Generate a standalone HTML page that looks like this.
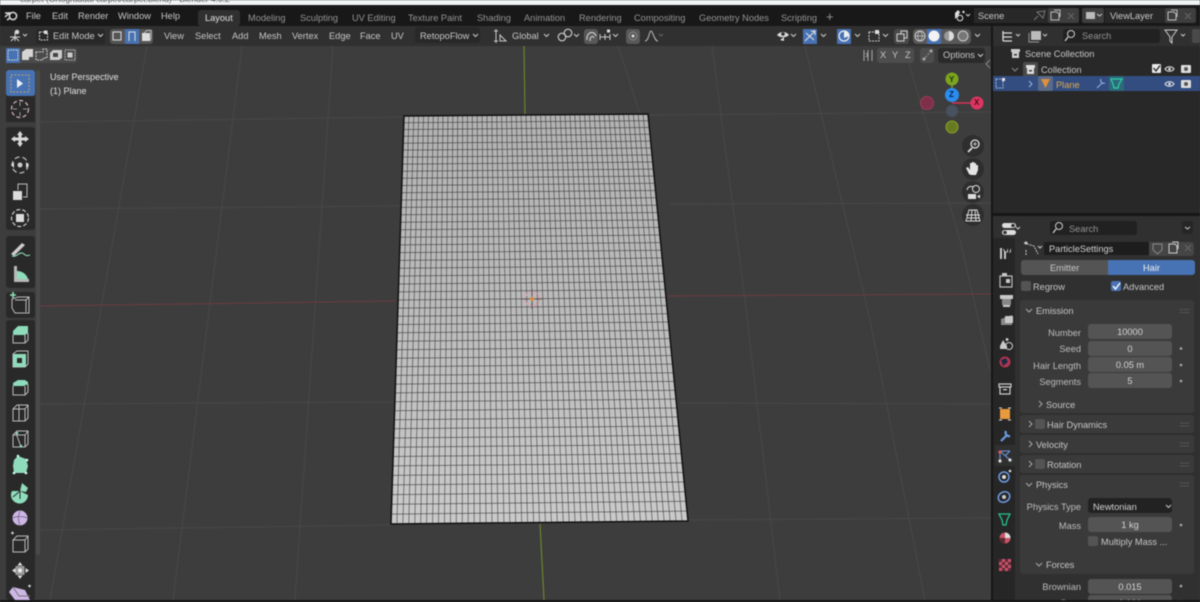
<!DOCTYPE html>
<html><head><meta charset="utf-8"><title>Blender</title>
<style>
html,body{margin:0;padding:0;width:1200px;height:602px;overflow:hidden;background:#3d3d3d}
#r{position:absolute;left:0;top:0;width:1200px;height:602px;overflow:hidden;filter:blur(.5px);font-family:"Liberation Sans",sans-serif;font-size:9.25px;color:#c6c6c6}
.b{position:absolute}
.t{position:absolute;white-space:nowrap;line-height:12px}
.d{color:#949494}
.f{position:absolute;left:1088px;width:84px;height:15px;line-height:16px;background:#545454;border-radius:3px;text-align:center;color:#d4d4d4}
.l{position:absolute;width:77px;left:1004px;text-align:right;line-height:12px;color:#bdbdbd}
.p{position:absolute;left:1020px;width:174px;background:#3a3a3a;border-radius:3px}
svg{position:absolute;left:0;top:0}
</style></head><body><div id="r">
<!-- base regions -->
<div class="b" style="left:0;top:0;width:1200px;height:5px;background:#f1f4f5"></div>
<div class="t" style="left:20px;top:-7px;color:#666;font-size:8.5px">carpet (Ortogradual carpet/carpet.blend) - Blender 4.0.2</div>
<div class="b" style="left:0;top:5px;width:1200px;height:21px;background:#181818"></div>
<div class="b" style="left:0;top:26px;width:991px;height:20px;background:#303030"></div>
<div class="b" style="left:0;top:46px;width:991px;height:554px;background:#3d3d3d"></div>
<div class="b" style="left:991px;top:26px;width:2px;height:576px;background:#161616"></div>
<div class="b" style="left:993px;top:26px;width:207px;height:20px;background:#303030"></div>
<div class="b" style="left:993px;top:46px;width:207px;height:167px;background:#282828"></div>
<div class="b" style="left:993px;top:213px;width:207px;height:3px;background:#161616"></div>
<div class="b" style="left:993px;top:216px;width:207px;height:22px;background:#303030"></div>
<div class="b" style="left:993px;top:238px;width:22px;height:364px;background:#262626"></div>
<div class="b" style="left:1015px;top:238px;width:185px;height:364px;background:#303030"></div>
<div class="b" style="left:0;top:600px;width:1200px;height:2px;background:#141414"></div>

<!-- viewport grid + mesh -->
<svg width="1200" height="602" viewBox="0 0 1200 602">
<defs><linearGradient id="m" x1="0" y1="0" x2="0" y2="1"><stop offset="0" stop-color="#b2b2b2"/><stop offset=".5" stop-color="#bcbcbc"/><stop offset="1" stop-color="#cacaca"/></linearGradient></defs>
<g stroke="#484848" stroke-width="1" fill="none">
<path d="M147 46L50 600M242 46L173 600M333 46L295 600M618 46L640 114M712 46L745 300L780 600M805 46L870 320L925 600M904 46L960 240L990 370"/>
<path d="M40 122L404 117M648 115L991 112M40 209L400 206M670 204L991 203M40 404L394 402M680 403L991 404M40 530L391 525M688 520L991 518"/>
</g>
<path d="M40 306L396 301M668 296L991 294" stroke="#6e3a40" stroke-width="1" fill="none"/>
<path d="M524 46L525 114M540 524L544 600" stroke="#6f8a2a" stroke-width="1.100" fill="none"/>
<path d="M404 116L648 114L688 521L391 524Z" fill="url(#m)"/>
<g stroke="#2e2e2e" stroke-width=".75" stroke-opacity=".72" fill="none">
<path d="M408.9 115.5L396.9 523M413.8 115.5L402.9 523M418.6 115.5L408.8 523M423.5 115.5L414.8 523M428.4 115.5L420.7 523M433.3 115.5L426.6 523M438.2 115.5L432.6 523M443 115.5L438.5 523M447.9 115.5L444.5 523M452.8 115.5L450.4 523M457.7 115.5L456.3 523M462.6 115.5L462.3 523M467.4 115.5L468.2 523M472.3 115.5L474.2 523M477.2 115.5L480.1 523M482.1 115.5L486 523M487 115.5L492 523M491.8 115.5L497.9 523M496.7 115.5L503.9 522.5M501.6 115.5L509.8 522.5M506.5 115.5L515.7 522.5M511.4 115L521.7 522.5M516.2 115L527.6 522.5M521.1 115L533.6 522.5M526 115L539.5 522.5M530.9 115L545.4 522.5M535.8 115L551.4 522.5M540.6 115L557.3 522.5M545.5 115L563.3 522.5M550.4 115L569.2 522.5M555.3 115L575.1 522.5M560.2 115L581.1 522.5M565 115L587 522.5M569.9 115L593 522.5M574.8 115L598.9 522M579.7 115L604.8 522M584.6 115L610.8 522M589.4 115L616.7 522M594.3 115L622.7 522M599.2 115L628.6 522M604.1 114.5L634.5 522M609 114.5L640.5 522M613.8 114.5L646.4 522M618.7 114.5L652.4 522M623.6 114.5L658.3 522M628.5 114.5L664.2 522M633.4 114.5L670.2 522M638.2 114.5L676.1 521.5M643.1 114.5L682.1 521.5"/>
<path d="M403.8 122.7L648.7 120.7M403.6 129.5L649.3 127.5M403.4 136.3L650 134.3M403.1 143.2L650.7 141.1M402.9 150.1L651.3 148M402.7 157.1L652 155M402.5 164.1L652.7 162M402.2 171.2L653.4 169.1M402 178.3L654.1 176.1M401.8 185.5L654.8 183.3M401.6 192.7L655.5 190.5M401.3 200L656.2 197.8M401.1 207.4L657 205.2M400.9 214.8L657.7 212.6M400.6 222.2L658.4 220M400.4 229.7L659.2 227.4M400.1 237.3L659.9 235M399.9 244.9L660.6 242.6M399.6 252.6L661.4 250.3M399.4 260.4L662.2 258M399.2 268.2L662.9 265.8M398.9 276L663.7 273.6M398.6 284L664.5 281.6M398.4 291.9L665.2 289.5M398.1 300L666 297.5M397.9 308.1L666.8 305.6M397.6 316.3L667.6 313.8M397.4 324.5L668.4 322M397.1 332.8L669.3 330.3M396.8 341.2L670.1 338.6M396.6 349.7L670.9 347.1M396.3 358.2L671.7 355.6M396 366.7L672.6 364.1M395.7 375.4L673.4 372.8M395.5 384.1L674.3 381.4M395.2 392.9L675.1 390.2M394.9 401.8L676 399.1M394.6 410.7L676.9 408M394.3 419.7L677.8 417M394 428.8L678.7 426M393.7 438L679.6 435.2M393.4 447.2L680.5 444.4M393.2 456.5L681.4 453.7M392.9 465.9L682.3 463M392.5 475.4L683.2 472.5M392.2 484.9L684.2 482M391.9 494.6L685.1 491.7M391.6 504.3L686.1 501.3M391.3 514.1L687 511.1"/>
</g>
<path d="M404 116L648 114L688 521L391 524Z" fill="none" stroke="#111" stroke-width="1.500"/>
<!-- 3d cursor -->
<circle cx="532" cy="299" r="7" fill="none" stroke="#d8a0ae" stroke-width="1.800" stroke-dasharray="3.500 1.500"/>
<path d="M522 299H529M535 299H542M532 289V296M532 302V309" stroke="#555" stroke-width="1"/>
<circle cx="532" cy="299" r="2" fill="#d98a3a"/>
</svg>

<!-- top bar -->
<svg width="1200" height="602" viewBox="0 0 1200 602">
<g fill="none" stroke="#d8d8d8" stroke-width="1.500"><circle cx="13" cy="16" r="3.600"/><path d="M5 17L10 12.500M5 13H11M7 20L10 18"/></g>
<rect x="198" y="10" width="42" height="16" rx="3" fill="#303030"/>
<!-- header 2 left -->
<g fill="none" stroke="#cfcfcf" stroke-width="1">
<path d="M10 37H20M15 32V41M11 41L15 37L19 41"/><circle cx="17" cy="32" r="1.800" fill="#ddd"/><path d="M23 34L25 36L27 34"/>
</g>
<rect x="36" y="29" width="69" height="15" rx="3" fill="#282828"/>
<g fill="none" stroke="#cfcfcf" stroke-width="1"><rect x="39.500" y="32" width="8" height="8" stroke-dasharray="2 1"/><rect x="44" y="30.500" width="3.500" height="3.500" fill="#ddd" stroke="none"/><path d="M98 34L100.500 36.500L103 34"/></g>
<rect x="110" y="29" width="43" height="15" rx="3" fill="#545454"/>
<rect x="125" y="29" width="14" height="15" fill="#4772b3"/>
<g fill="none" stroke="#ddd" stroke-width="1"><path d="M113 40V32H121V40Z"/><path d="M129 41V32H135V41"/></g>
<rect x="142" y="33" width="8" height="8" fill="#ddd"/><path d="M144 33L147 30.500H151V38L150 41" fill="none" stroke="#bbb"/>
<rect x="415" y="27" width="65" height="16" rx="3" fill="#282828"/>
<path d="M473 34L475.500 36.500L478 34" fill="none" stroke="#ccc"/>
<path d="M496 29V43M494 31H498M494 41H498M500 41H506L500 35Z" fill="none" stroke="#c8c8c8"/>
<path d="M544 34L546.500 36.500L549 34M613 34L615.500 36.500L618 34" fill="none" stroke="#ccc"/>
<g fill="none" stroke="#d0d0d0" stroke-width="1.100"><circle cx="562" cy="37" r="3.800"/><circle cx="568" cy="33" r="3.800"/></g>
<path d="M574 34L576.500 36.500L579 34" fill="none" stroke="#ccc"/>
<rect x="584" y="29" width="14" height="15" rx="3" fill="#585858"/>
<path d="M587 40C586 32 594 30 596 36M590 41C590 36 593 35 594 38" fill="none" stroke="#c8c8c8" stroke-width="1.200"/>
<path d="M600 37H610M600 34V40M605 34V40M610 34V40" stroke="#c8c8c8" fill="none"/><rect x="607" y="29.500" width="3" height="3" fill="#ddd"/>
<rect x="626" y="29" width="14" height="15" rx="3" fill="#585858"/><circle cx="633" cy="36" r="4" fill="none" stroke="#888"/><circle cx="633" cy="36" r="1.500" fill="#ddd"/>
<path d="M645 41C649 41 649 31 651 31C653 31 654 41 658 41" fill="none" stroke="#b8b8b8"/>
<path d="M659 34L661 36L663 34" fill="none" stroke="#666"/>
<!-- header right -->
<path d="M777 35C780 31 786 31 789 35C786 38 780 38 777 35Z" fill="#ddd"/><circle cx="783" cy="34" r="1.800" fill="#303030"/><path d="M780 40L784 37V41Z" fill="#ddd"/><path d="M791 34L793.500 36.500L796 34" fill="none" stroke="#ccc"/>
<rect x="803" y="29" width="14" height="15" fill="#4772b3"/><path d="M805 41L815 31M806 33L814 40M811 31H815V35" fill="none" stroke="#e2e2e2"/><path d="M821 34L823.500 36.500L826 34" fill="none" stroke="#ccc"/>
<rect x="837" y="29" width="14" height="15" fill="#4772b3"/><circle cx="844" cy="36" r="5" fill="none" stroke="#eee" stroke-width="1.200"/><path d="M844 31A5 5 0 0 1 849 36L844 38Z" fill="#eee"/><path d="M855 34L857.500 36.500L860 34" fill="none" stroke="#ccc"/>
<path d="M869 32H879V41H869Z" fill="none" stroke="#c8c8c8" stroke-dasharray="2 1"/><rect x="875" y="30" width="4" height="4" fill="#ddd"/><path d="M883 34L885.500 36.500L888 34" fill="none" stroke="#ccc"/>
<rect x="894" y="29" width="15" height="15" rx="3" fill="#4a4a4a"/><path d="M897 34H904V41H897ZM901 34V31H907V38H904" fill="none" stroke="#cfcfcf"/>
<rect x="913" y="29" width="58" height="15" rx="4" fill="#585858"/>
<rect x="927" y="29" width="14" height="15" fill="#4772b3"/>
<circle cx="920" cy="36" r="5" fill="none" stroke="#ccc"/><path d="M915 36H925M920 31C917 34 917 38 920 41M920 31C923 34 923 38 920 41" fill="none" stroke="#ccc" stroke-width=".7"/>
<circle cx="934" cy="36" r="5.500" fill="#f2f2f2"/>
<circle cx="949" cy="36" r="5" fill="#999"/><path d="M949 31A5 5 0 0 1 949 41Z" fill="#ddd"/>
<circle cx="963" cy="36" r="5" fill="#777" stroke="#ccc"/>
<path d="M975 34L977.500 36.500L980 34" fill="none" stroke="#ccc"/>
<!-- select mode row -->
<rect x="6" y="48" width="71" height="15" rx="3" fill="#4b4b4b"/>
<rect x="6" y="48" width="14" height="15" fill="#4772b3"/>
<rect x="8" y="50" width="10" height="10" fill="none" stroke="#ddd" stroke-dasharray="1.500 1"/>
<path d="M22 52L26 49H33V57H29V60H22Z" fill="#d5d5d5"/>
<path d="M36 52H43V49H47V58H43V60H36Z" fill="none" stroke="#ccc" stroke-dasharray="2 1"/>
<path d="M50 53L53 50H62V58L59 60H50Z" fill="#ccc"/><rect x="53" y="53" width="5" height="4" fill="#444"/>
<rect x="65" y="50" width="10" height="10" fill="none" stroke="#bbb" stroke-dasharray="1.500 1"/><rect x="67.500" y="52.500" width="5" height="5" fill="#ccc"/>
<!-- second row right -->
<path d="M864 50V61M872 50V61M868 50L868 61M866 53L868 55L866 57" fill="none" stroke="#aaa"/>
<rect x="877" y="48" width="37" height="15" rx="3" fill="#4d4d4d"/>
<rect x="920" y="48" width="14" height="15" rx="3" fill="#4d4d4d"/>
<path d="M923 60L931 51" stroke="#999" stroke-dasharray="2 1.500"/><circle cx="924" cy="59" r="1.500" fill="#aaa"/><circle cx="931" cy="51" r="1.500" fill="#aaa"/>
<rect x="938" y="48" width="47" height="15" rx="3" fill="#2a2a2a"/>
<path d="M978 54L980.500 56.500L983 54" fill="none" stroke="#ccc"/>
<!-- gizmo -->
<path d="M952 103H977" stroke="#d8335c" stroke-width="1.500"/><path d="M952 79V95" stroke="#7ba51e" stroke-width="1.500"/>
<circle cx="927" cy="103" r="6.500" fill="#7e3049" stroke="#a13a5a"/>
<circle cx="952" cy="111" r="6" fill="#47515f"/>
<circle cx="952" cy="79" r="6.500" fill="#7ba51e"/>
<circle cx="952" cy="95" r="7" fill="#2b8cf0"/>
<circle cx="977" cy="103" r="6.500" fill="#de3560"/>
<circle cx="952" cy="127" r="6" fill="#677a22" stroke="#8ca428"/>
<!-- nav buttons -->
<g fill="#2e2e2e"><circle cx="973" cy="146" r="11"/><circle cx="973" cy="169" r="11"/><circle cx="973" cy="192" r="11"/><circle cx="973" cy="215" r="11"/></g>
<circle cx="975" cy="144" r="4" fill="none" stroke="#ddd" stroke-width="1.300"/><path d="M968 152L972 148" stroke="#ddd" stroke-width="1.800"/><path d="M973 144H977M975 142V146" stroke="#ddd" stroke-width=".8"/>
<path d="M969 174L966 168L968 167L970 170V163H972V168V162H974V168V163H976V168V165H978V170L976 175H971Z" fill="#e4e4e4"/>
<circle cx="976" cy="189" r="3.500" fill="none" stroke="#ddd"/><path d="M967 190C968 186 971 186 973 187" fill="none" stroke="#ddd"/><rect x="968" y="194" width="8" height="5" fill="#ddd"/><path d="M977 196.500L980 194.500V198.500Z" fill="#ddd"/>
<path d="M969 210H977L980 221H966ZM966 215H980M972 210L971 221M975 210L976 221M967.500 218H979" fill="none" stroke="#ddd"/>
<path d="M990 60L986 64L990 68" fill="none" stroke="#888"/>
<!-- left toolbar -->
<rect x="36" y="70" width="4" height="485" rx="2" fill="#4a4a4a"/>
<g fill="#292929"><rect x="6" y="96" width="29" height="26"/><rect x="6" y="127" width="29" height="103" rx="3"/><rect x="6" y="236" width="29" height="52" rx="3"/><rect x="6" y="292" width="29" height="26" rx="3"/><rect x="6" y="320" width="29" height="280" rx="3"/></g>
<rect x="6" y="70" width="29" height="26" rx="3" fill="#4772b3"/>
<rect x="11" y="75" width="18" height="17" fill="none" stroke="#c2a36a" stroke-dasharray="2 1.500"/><path d="M17 79V88L23 83.500Z" fill="#f0f0f0"/>
<circle cx="20" cy="109" r="8.500" fill="none" stroke="#d9b9c0" stroke-width="1.200" stroke-dasharray="4 2.500"/><path d="M20 102V106M20 112V116M13 109H17M23 109H27" stroke="#999"/>
<g fill="#d8d8d8"><path d="M20 131L17 135H23ZM20 147L17 143H23ZM11 139L15 136V142ZM29 139L25 136V142Z"/><rect x="18.500" y="135" width="3" height="8"/><rect x="15" y="137.500" width="10" height="3"/></g>
<circle cx="20" cy="165" r="8" fill="none" stroke="#ccc" stroke-width="1.100" stroke-dasharray="5 3"/><circle cx="20" cy="165" r="2.500" fill="#ccc"/><path d="M11 165L14 162V168ZM29 165L26 162V168Z" fill="#ddd"/>
<rect x="13" y="191" width="9" height="9" fill="#dcdcdc"/><path d="M18 190V184H27V197H23" fill="none" stroke="#bbb"/>
<circle cx="20" cy="218" r="8.500" fill="none" stroke="#ccc" stroke-width="1.200" stroke-dasharray="4 2"/><rect x="16" y="214" width="8" height="8" fill="#dcdcdc"/>
<path d="M11 254L22 243L25 245L14 256Z" fill="#ccc"/><path d="M12 256C17 258 20 250 24 254C26 256 27 256 30 255" fill="none" stroke="#8fe0b8" stroke-width="1.100"/>
<path d="M14 266V282H29V279H17V266Z" fill="#b8b8b8"/><path d="M17 271C23 271 27 275 28 279H17Z" fill="#8fdcbc"/>
<path d="M12 308V299L18 297H29V313H15Z M15 300H26V312M26 300L29 297" fill="none" stroke="#bbb"/><path d="M13 292V298M10 295H16" stroke="#8fe0b8" stroke-width="1.600"/>
<path d="M13 331L18 326H28V333L25 335H13Z" fill="#8fdcbc"/><path d="M13 335V343H25V335M25 343L28 340V333" fill="none" stroke="#bbb"/>
<path d="M13 354L17 351H28V364L25 367H13Z" fill="none" stroke="#bbb"/><rect x="13" y="354" width="13" height="13" fill="#8fdcbc"/><rect x="17" y="358" width="5" height="5" fill="#2a2a2a"/>
<path d="M13 383L18 380H25L28 383L24 386H13Z" fill="#8fdcbc"/><path d="M13 386V395H25V386M25 395L28 392V384" fill="none" stroke="#bbb"/><circle cx="26" cy="383" r="2" fill="#8fdcbc"/>
<path d="M13 409L17 405H28V418L25 421H13ZM25 409V421M19 405L19 421M25 409H13M25 409L28 405" fill="none" stroke="#bbb"/>
<path d="M13 435L17 431H28V444L25 447H13ZM25 435L28 431M13 435H25V447M16 433L21 447" fill="none" stroke="#bbb"/><circle cx="21" cy="446" r="1.300" fill="#8fdcbc"/><circle cx="17" cy="433" r="1.300" fill="#8fdcbc"/>
<path d="M14 460L18 456L26 459L28 466L26 473H14L13 466Z" fill="#8fdcbc"/><g fill="#cfe" ><circle cx="14" cy="473" r="1.300"/><circle cx="26" cy="473" r="1.300"/><circle cx="18" cy="456" r="1.300"/><circle cx="27" cy="460" r="1.300"/></g>
<path d="M20 491L12 491A8.500 8.500 0 1 0 28 495L20 491Z" fill="#8fdcbc"/><path d="M20 491L22 483L28 488L26 492Z" fill="#8fdcbc"/><path d="M20 491L18 483M20 491L14 486M20 491L13 497M20 491V499" stroke="#2a2a2a"/>
<circle cx="20" cy="518" r="7.500" fill="#cdb6e6"/><path d="M13 518C17 516 23 516 27 518M20 511C18 515 18 521 20 525" fill="none" stroke="#6f6480" stroke-width=".8"/>
<path d="M13 540L17 536H28V549L25 552H13ZM25 540L28 536M13 540H25V552" fill="none" stroke="#bbb"/><path d="M11 533H14M12.500 531.500V534.500" stroke="#ddd"/>
<g fill="#ddd"><path d="M20 562L17.500 565.500H22.500ZM20 579L17.500 575.500H22.500ZM12 570.500L15.500 568V573ZM29 570.500L25.500 568V573Z"/></g><rect x="15.500" y="566" width="9" height="9" fill="#9a9a9a"/><circle cx="20" cy="570.500" r="2" fill="#eee"/>
<path d="M9 592L13 587L25 590L30 600H15Z" fill="#cdb6e6"/><path d="M13 587L19 596H30" fill="none" stroke="#777"/><path d="M28 586H31M29.500 584.500V587.500" stroke="#ddd"/>

<!-- top right -->
<path d="M955 13L958 10L960 12L958 16L955 19Z" fill="#ddd"/><circle cx="960" cy="18" r="2.800" fill="none" stroke="#ddd"/><circle cx="963.500" cy="12" r="1.200" fill="#ddd"/><path d="M966 14L968 16L970 14" fill="none" stroke="#ccc"/>
<rect x="974" y="8" width="75" height="15" fill="#282828"/>
<path d="M1034 20L1038 16M1037 12L1043 18L1045 11Z" fill="none" stroke="#777"/>
<rect x="1048" y="8" width="31" height="15" rx="2" fill="#3e3e3e"/><path d="M1051 12H1057L1059 14V20H1051Z M1054 10H1060V17" fill="none" stroke="#bbb"/><path d="M1068 13L1074 19M1074 13L1068 19" stroke="#666"/>
<rect x="1082" y="8" width="22" height="15" rx="2" fill="#3e3e3e"/><path d="M1086 12H1095V19H1086Z" fill="#bbb"/><path d="M1097 14L1099.500 16L1102 14" fill="none" stroke="#ccc"/>
<rect x="1105" y="8" width="70" height="15" fill="#282828"/>
<rect x="1165" y="8" width="31" height="15" rx="2" fill="#3e3e3e"/><path d="M1168 12H1174L1176 14V20H1168Z M1171 10H1177V17" fill="none" stroke="#bbb"/><path d="M1185 13L1191 19M1191 13L1185 19" stroke="#666"/>
<!-- outliner -->
<path d="M1003 31V41M1003 33H1012M1003 37H1012M1003 41H1012" fill="none" stroke="#ddd" stroke-width="1.300"/><path d="M1016 34L1018 36L1020 34" fill="none" stroke="#ccc"/>
<rect x="1031" y="31" width="10" height="9" fill="#bbb"/><path d="M1029 33V42H1039" fill="none" stroke="#999"/><path d="M1043 34L1045 36L1047 34" fill="none" stroke="#ccc"/>
<rect x="1063" y="29" width="97" height="14" rx="3" fill="#212121"/>
<circle cx="1071" cy="34" r="3.500" fill="none" stroke="#ccc"/><path d="M1068 37L1065 41" stroke="#ccc" stroke-width="1.300"/>
<path d="M1165 30H1177L1172 37V43L1170 41V37Z" fill="none" stroke="#ccc"/><path d="M1181 34L1183 36L1185 34" fill="none" stroke="#ccc"/>
<rect x="1192" y="29" width="8" height="14" rx="2" fill="#4a4a4a"/>
<path d="M1011 49H1020V52H1011ZM1012 52H1019V58H1012Z" fill="#ccc"/><rect x="1014" y="54" width="3" height="1.500" fill="#333"/>
<path d="M1012 68L1015 71L1018 68" fill="none" stroke="#888"/>
<rect x="1023" y="62" width="15" height="15" rx="2" fill="#4a4a4a"/><path d="M1026 65H1035V68H1026ZM1027 68H1034V74H1027Z" fill="#ddd"/><rect x="1029" y="70" width="3" height="1.500" fill="#444"/>
<rect x="1152" y="64" width="9" height="9" rx="1" fill="#e8e8e8"/><path d="M1153.500 68L1156 71L1160 65.500" fill="none" stroke="#222" stroke-width="1.300"/>
<rect x="993" y="76" width="207" height="15" fill="#334d80"/>
<path d="M1165 69C1167 66 1172 66 1174 69C1172 72 1167 72 1165 69Z M1165 84C1167 81 1172 81 1174 84C1172 87 1167 87 1165 84Z" fill="none" stroke="#e8e8e8" stroke-width="1.100"/><circle cx="1169.500" cy="69" r="1.300" fill="#e8e8e8"/><circle cx="1169.500" cy="84" r="1.300" fill="#e8e8e8"/>
<rect x="1181" y="65" width="10" height="8" rx="1" fill="#ddd"/><circle cx="1186" cy="69" r="2" fill="#555"/><rect x="1181" y="80" width="10" height="8" rx="1" fill="#ddd"/><circle cx="1186" cy="84" r="2" fill="#555"/>
<path d="M996 79H1003V88H996Z" fill="none" stroke="#9db5dd" stroke-dasharray="2 1"/><rect x="1002" y="78" width="3" height="3" fill="#e8e8e8"/>
<path d="M1029 81L1032 84L1029 87" fill="none" stroke="#9db5dd"/>
<rect x="1038" y="76" width="15" height="15" rx="2" fill="#5a6b8a"/><path d="M1041 79H1050L1045.500 88Z" fill="#e08f3c"/>
<path d="M1097 88L1102 83M1101 79A3 3 0 0 0 1105 83" fill="none" stroke="#8aa8dd" stroke-width="1.200"/>
<rect x="1109" y="76" width="15" height="15" rx="2" fill="#2d6a7a"/><path d="M1111 79H1122L1119 84L1118 88H1114L1113 84Z" fill="none" stroke="#2fd0a8" stroke-width="1.200"/>
<!-- props header -->
<rect x="1002" y="223" width="14" height="5" rx="2.500" fill="#ddd"/><rect x="1002" y="230" width="14" height="5" rx="2.500" fill="#ddd"/><circle cx="1013" cy="225.500" r="1.800" fill="#333"/><circle cx="1005" cy="232.500" r="1.800" fill="#333"/><path d="M1016 227L1018 229L1020 227" fill="none" stroke="#ccc"/>
<rect x="1050" y="221" width="87" height="14" rx="3" fill="#212121"/>
<circle cx="1059" cy="226" r="3.500" fill="none" stroke="#ccc"/><path d="M1056 229L1053 233" stroke="#ccc" stroke-width="1.300"/>
<rect x="1182" y="221" width="11" height="13" rx="3" fill="#262626"/><path d="M1185 227L1187.500 229L1190 227" fill="none" stroke="#ccc"/>
<!-- tabs -->
<g fill="#c8c8c8">
<path d="M1000 248H1002V259H1000ZM1003 248L1006 252V259H1004V252ZM1008 248V252L1006 253ZM1011 248V252L1009 253Z"/>
<path d="M1000 276H1012V287H1000Z" fill="none" stroke="#bbb" stroke-width="1.200"/><rect x="1002" y="273" width="5" height="3"/><rect x="1006" y="279" width="4" height="4"/>
<rect x="1000" y="295" width="13" height="4"/><rect x="1002" y="299" width="9" height="6" fill="#888"/><rect x="1003" y="305" width="7" height="2"/>
<path d="M1001 319L1012 315V325H1001Z" fill="#888"/><rect x="1005" y="316" width="8" height="7"/>
<path d="M1000 346L1003 340L1007 346V349H1000ZM1007 338A1.500 1.500 0 1 0 1007.100 338Z"/><circle cx="1009" cy="346" r="3.500" fill="none" stroke="#ccc"/>
</g>
<circle cx="1005" cy="362" r="5.500" fill="#b2354f"/><path d="M1001 360L1006 358L1008 362L1003 366Z" fill="#1d2a44"/>
<path d="M999 384H1011V387H999ZM1000 387H1010V394H1000Z" fill="none" stroke="#ccc" stroke-width="1.200"/><rect x="1003" y="389" width="4" height="1.300" fill="#ccc"/>
<rect x="1000" y="409" width="10" height="10" fill="#e89b3c"/><path d="M999 408H1002M1008 408H1011M999 420H1002M1008 420H1011" stroke="#ddd"/>
<path d="M1001 441L1007 435M1006 431A3.500 3.500 0 0 0 1010 436" fill="none" stroke="#6d9ae0" stroke-width="2.200"/>
<rect x="995" y="445" width="20" height="21" fill="#303030"/>
<path d="M1000 451L1010 460M1000 451V461M1000 451H1010M1005 456L1010 451" fill="none" stroke="#6d9ae0" stroke-width="1.100"/><circle cx="1000" cy="452" r="1.600" fill="#dc5a5a"/><circle cx="1010" cy="460" r="1.600" fill="#ddd"/><circle cx="1000" cy="461" r="1.600" fill="#ddd"/>
<circle cx="1004" cy="477" r="5" fill="none" stroke="#6d9ae0" stroke-width="1.500"/><circle cx="1004" cy="477" r="2" fill="#ddd"/><circle cx="1010" cy="471" r="1.300" fill="#ddd"/>
<ellipse cx="1004" cy="497" rx="6" ry="5" fill="none" stroke="#6d9ae0" stroke-width="1.500" transform="rotate(-30 1004 497)"/><circle cx="1004" cy="497" r="2" fill="#ccc"/>
<path d="M999 514H1010L1007 520L1006 525H1003L1002 520Z" fill="none" stroke="#24c48c" stroke-width="1.300"/>
<circle cx="1005" cy="538" r="5.500" fill="#c85468"/><path d="M1005 538V532.500A5.500 5.500 0 0 1 1010.500 538Z" fill="#ddd"/><path d="M1005 538H999.500A5.500 5.500 0 0 0 1005 543.500Z" fill="#5a2a32"/>
<rect x="999" y="559" width="12" height="12" fill="#c85468"/><path d="M999 559h3v3h-3zM1005 559h3v3h-3zM1002 562h3v3h-3zM1008 562h3v3h-3zM999 565h3v3h-3zM1005 565h3v3h-3zM1002 568h3v3h-3zM1008 568h3v3h-3z" fill="#602a38"/>
</svg>

<!-- panels -->
<div class="p" style="top:300px;height:113px"></div>
<div class="p" style="top:415px;height:18px"></div>
<div class="p" style="top:435px;height:18px"></div>
<div class="p" style="top:455px;height:18px"></div>
<div class="p" style="top:475px;height:99px"></div>
<div class="b" style="left:1044px;top:242px;width:105px;height:13px;background:#1d1d1d"></div>
<div class="b" style="left:1149px;top:242px;width:45px;height:14px;background:#454545;border-radius:0 3px 3px 0"></div>
<div class="b" style="left:1021px;top:260px;width:87px;height:15px;background:#545454;border-radius:3px 0 0 3px"></div>
<div class="b" style="left:1108px;top:260px;width:87px;height:15px;background:#4772b3;border-radius:0 3px 3px 0"></div>
<div class="b" style="left:1021px;top:281px;width:10px;height:10px;background:#545454;border-radius:2px"></div>
<div class="b" style="left:1111px;top:281px;width:10px;height:10px;background:#4772b3;border-radius:2px"></div>
<div class="b" style="left:1035px;top:419px;width:10px;height:10px;background:#545454;border-radius:2px"></div>
<div class="b" style="left:1035px;top:459px;width:10px;height:10px;background:#545454;border-radius:2px"></div>
<div class="b" style="left:1088px;top:536px;width:10px;height:10px;background:#545454;border-radius:2px"></div>
<div class="b" style="left:1088px;top:498px;width:84px;height:15px;background:#222;border-radius:3px"></div>
<svg width="1200" height="602" viewBox="0 0 1200 602">
<path d="M1113 286L1115.500 289L1120 283" fill="none" stroke="#fff" stroke-width="1.400"/>
<path d="M1024 243L1034 246L1038 254M1026 250V255" fill="none" stroke="#ccc" stroke-dasharray="2 1"/><circle cx="1026" cy="243" r="1.500" fill="#ccc"/><path d="M1038 246L1040 248L1042 246" fill="none" stroke="#ccc"/>
<path d="M1153 244H1162V250L1157.500 254L1153 250Z" fill="none" stroke="#888"/><path d="M1169 244H1175L1177 246V253H1169ZM1172 242H1178V249" fill="none" stroke="#ccc"/><path d="M1185 245L1191 251M1191 245L1185 251" stroke="#666"/>
<g fill="none" stroke="#a8a8a8"><path d="M1026 309L1029 312L1032 309M1026 483L1029 486L1032 483M1036 563L1039 566L1042 563"/><path d="M1039 401L1042 404L1039 407M1029 421L1032 424L1029 427M1029 441L1032 444L1029 447M1029 461L1032 464L1029 467"/></g>
<g fill="#aaa"><circle cx="1181" cy="348.500" r="1.300"/><circle cx="1181" cy="365" r="1.300"/><circle cx="1181" cy="381" r="1.300"/><circle cx="1181" cy="525" r="1.300"/><circle cx="1181" cy="586" r="1.300"/><circle cx="1181" cy="601" r="1.300"/></g>
<g stroke="#6a6a6a" stroke-dasharray="1 1" fill="none"><path d="M1180 309.500H1189M1180 312.500H1189M1180 423H1189M1180 426H1189M1180 443H1189M1180 446H1189M1180 463H1189M1180 466H1189M1180 483H1189M1180 486H1189"/></g>
<path d="M1166 505L1168.500 507.500L1171 505" fill="none" stroke="#ccc"/>
</svg>

<!-- text -->
<div class="t" style="left:26px;top:10px">File</div>
<div class="t" style="left:52px;top:10px">Edit</div>
<div class="t" style="left:78px;top:10px">Render</div>
<div class="t" style="left:118px;top:10px">Window</div>
<div class="t" style="left:161px;top:10px">Help</div>
<div class="t" style="left:205px;top:12px;color:#e0e0e0">Layout</div>
<div class="t d" style="left:248px;top:12px">Modeling</div>
<div class="t d" style="left:300px;top:12px">Sculpting</div>
<div class="t d" style="left:352px;top:12px">UV Editing</div>
<div class="t d" style="left:408px;top:12px">Texture Paint</div>
<div class="t d" style="left:477px;top:12px">Shading</div>
<div class="t d" style="left:524px;top:12px">Animation</div>
<div class="t d" style="left:579px;top:12px">Rendering</div>
<div class="t d" style="left:634px;top:12px">Compositing</div>
<div class="t d" style="left:699px;top:12px">Geometry Nodes</div>
<div class="t d" style="left:781px;top:12px">Scripting</div>
<div class="t d" style="left:826px;top:11px;font-size:13px">+</div>
<div class="t" style="left:978px;top:10px">Scene</div>
<div class="t" style="left:1110px;top:10px">ViewLayer</div>
<div class="t" style="left:53px;top:30px">Edit Mode</div>
<div class="t" style="left:164px;top:30px">View</div>
<div class="t" style="left:195px;top:30px">Select</div>
<div class="t" style="left:232px;top:30px">Add</div>
<div class="t" style="left:259px;top:30px">Mesh</div>
<div class="t" style="left:292px;top:30px">Vertex</div>
<div class="t" style="left:329px;top:30px">Edge</div>
<div class="t" style="left:360px;top:30px">Face</div>
<div class="t" style="left:391px;top:30px">UV</div>
<div class="t" style="left:420px;top:30px">RetopoFlow</div>
<div class="t" style="left:512px;top:30px">Global</div>
<div class="t" style="left:880px;top:49px">X</div>
<div class="t" style="left:892px;top:49px">Y</div>
<div class="t" style="left:905px;top:49px">Z</div>
<div class="t" style="left:943px;top:49px">Options</div>
<div class="t" style="left:50px;top:71px;color:#e0e0e0;font-size:9px">User Perspective</div>
<div class="t" style="left:50px;top:85px;color:#e0e0e0;font-size:9px">(1) Plane</div>
<div class="t" style="left:949px;top:74px;color:#1f3300;font-size:8px;font-weight:bold">Y</div>
<div class="t" style="left:949px;top:89px;color:#06264d;font-size:8px;font-weight:bold">Z</div>
<div class="t" style="left:974px;top:97px;color:#4d0a1e;font-size:8px;font-weight:bold">X</div>
<div class="t d" style="left:1082px;top:30px">Search</div>
<div class="t" style="left:1025px;top:48px">Scene Collection</div>
<div class="t" style="left:1041px;top:64px">Collection</div>
<div class="t" style="left:1056px;top:79px;color:#e0a94e">Plane</div>
<div class="t d" style="left:1069px;top:223px">Search</div>
<div class="t" style="left:1049px;top:243px;color:#d2d2d2">ParticleSettings</div>
<div class="t" style="left:1050px;top:262px">Emitter</div>
<div class="t" style="left:1143px;top:262px;color:#f0f0f0">Hair</div>
<div class="t" style="left:1033px;top:281px">Regrow</div>
<div class="t" style="left:1123px;top:281px">Advanced</div>
<div class="t" style="left:1036px;top:305px">Emission</div>
<div class="l" style="top:327px">Number</div><div class="f" style="top:324px">10000</div>
<div class="l" style="top:343px">Seed</div><div class="f" style="top:341px">0</div>
<div class="l" style="top:360px">Hair Length</div><div class="f" style="top:357px">0.05 m</div>
<div class="l" style="top:376px">Segments</div><div class="f" style="top:373px">5</div>
<div class="t" style="left:1046px;top:399px">Source</div>
<div class="t" style="left:1047px;top:419px">Hair Dynamics</div>
<div class="t" style="left:1036px;top:439px">Velocity</div>
<div class="t" style="left:1047px;top:459px">Rotation</div>
<div class="t" style="left:1036px;top:479px">Physics</div>
<div class="l" style="top:501px">Physics Type</div>
<div class="t" style="left:1093px;top:501px;color:#d2d2d2">Newtonian</div>
<div class="l" style="top:520px">Mass</div><div class="f" style="top:517px">1 kg</div>
<div class="t" style="left:1101px;top:536px">Multiply Mass ...</div>
<div class="t" style="left:1046px;top:559px">Forces</div>
<div class="l" style="top:581px">Brownian</div><div class="f" style="top:579px">0.015</div>
<div class="l" style="top:597px">Drag</div><div class="f" style="top:595px">0.000</div>
<div class="b" style="left:0;top:600px;width:1200px;height:2px;background:#141414"></div>
</div></body></html>
